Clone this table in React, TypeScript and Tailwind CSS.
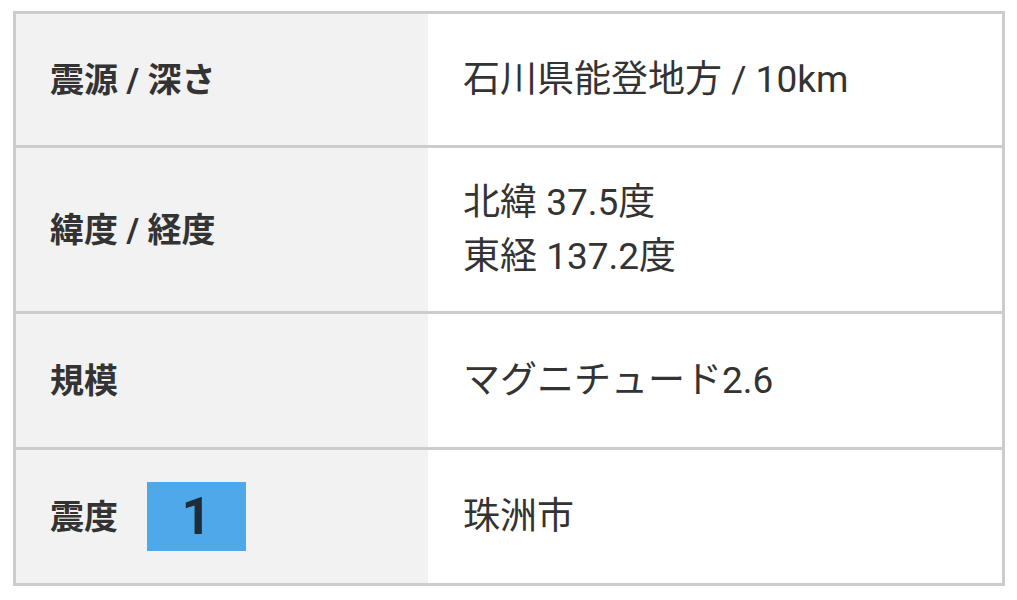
import React from "react";

const font = { fontFamily: 'Roboto, "Noto Sans CJK JP", sans-serif' };

type Row = { label: React.ReactNode; value: React.ReactNode; h: string };

const rows: Row[] = [
  { label: "震源 / 深さ", value: "石川県能登地方 / 10km", h: "h-[131px]" },
  {
    label: "緯度 / 経度",
    value: (
      <>
        <div>北緯 37.5度</div>
        <div>東経 137.2度</div>
      </>
    ),
    h: "h-[166px]",
  },
  { label: "規模", value: "マグニチュード2.6", h: "h-[136px]" },
  {
    label: (
      <div className="flex items-center gap-[29px]">
        <span>震度</span>
        <span className="flex h-[69px] w-[99px] items-center justify-center bg-[#4ea8ea] text-[52px] font-bold leading-none text-[#1f2d3a]">
          1
        </span>
      </div>
    ),
    value: "珠洲市",
    h: "h-[136px]",
  },
];

export default function App() {
  return (
    <div className="min-h-[600px] bg-white pl-[13px] pt-[11px]" style={font}>
      <div className="w-[992px] border-[3px] border-[#cccccc]">
        {rows.map((r, i) => (
          <div
            key={i}
            className={`grid grid-cols-[412px_1fr] ${r.h} ${i > 0 ? "border-t-[3px] border-[#cccccc]" : ""}`}
          >
            <div className="flex items-center bg-[#f2f2f2] pl-[34px] text-[34px] font-bold leading-[54px] text-[#333333]">
              {r.label}
            </div>
            <div className="flex flex-col justify-center bg-white pl-[35px] text-[37px] leading-[54px] text-[#333333]">
              {r.value}
            </div>
          </div>
        ))}
      </div>
    </div>
  );
}
